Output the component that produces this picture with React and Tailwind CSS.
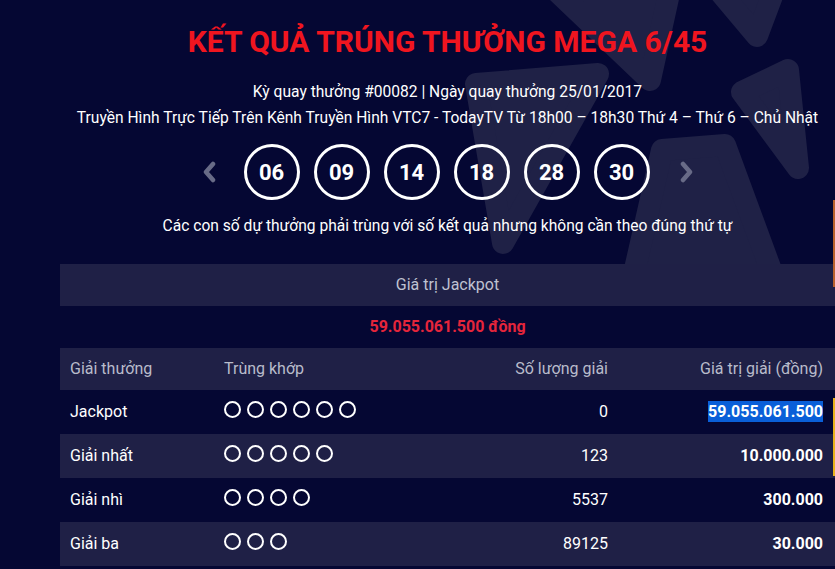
import React from 'react';

const balls = ['06', '09', '14', '18', '28', '30'];

const prizes = [
  { name: 'Jackpot', match: 6, count: '0', value: '59.055.061.500', selected: true },
  { name: 'Giải nhất', match: 5, count: '123', value: '10.000.000' },
  { name: 'Giải nhì', match: 4, count: '5537', value: '300.000' },
  { name: 'Giải ba', match: 3, count: '89125', value: '30.000' },
];

const Chevron = ({ left }) => (
  <svg width="16" height="22" viewBox="0 0 16 22" className="shrink-0">
    <polyline
      points={left ? '12,3 5,11 12,19' : '4,3 11,11 4,19'}
      fill="none"
      stroke="#686b87"
      strokeWidth="4.5"
      strokeLinecap="round"
      strokeLinejoin="round"
    />
  </svg>
);

// big faded logo petals behind the header
const Backdrop = () => (
  <svg className="absolute left-0 top-0" width="835" height="265" viewBox="0 0 835 265">
    <g fill="#1f2146" stroke="#1f2146" strokeWidth="22" strokeLinejoin="round">
      <polygon points="545,-20 672,-20 650,80" />
      <polygon points="710,-20 778,-20 757,36" />
      <polygon points="742,92 788,70 798,168" />
      <polygon points="725,145 662,150 628,300 782,300" />
      <polygon points="476,84 598,74 503,243" />
    </g>
  </svg>
);

const Dots = ({ n }) => (
  <div className="flex gap-[6px] pb-[6px]">
    {Array.from({ length: n }).map((_, i) => (
      <span key={i} className="w-[17px] h-[17px] rounded-full border-[2.5px] border-white" />
    ))}
  </div>
);

const App = () => {
  return (
    <div className="relative min-h-[569px] overflow-hidden bg-[#050733] font-['Roboto',sans-serif]">
      <Backdrop />

      <div className="relative pl-[60px]">
        <div className="w-[775px]">
          <h1 className="pt-[24px] text-center text-[30px] leading-[36px] font-bold text-[#f0151f]">
            KẾT QUẢ TRÚNG THƯỞNG MEGA 6/45
          </h1>
          <p className="mt-[19px] text-center text-[15.6px] leading-[26px] text-white">
            Kỳ quay thưởng #00082 | Ngày quay thưởng 25/01/2017
          </p>
          <p className="text-center text-[15.6px] leading-[26px] text-white">
            Truyền Hình Trực Tiếp Trên Kênh Truyền Hình VTC7 - TodayTV Từ 18h00 – 18h30 Thứ 4 – Thứ 6 – Chủ Nhật
          </p>

          <div className="mt-[13px] flex items-center justify-center">
            <div className="mr-[27px]"><Chevron left /></div>
            <div className="flex gap-[14px]">
              {balls.map((b) => (
                <div
                  key={b}
                  className="flex h-[56px] w-[56px] items-center justify-center rounded-full border-[3px] border-white text-[22px] font-bold text-white"
                >
                  {b}
                </div>
              ))}
            </div>
            <div className="ml-[29px]"><Chevron /></div>
          </div>

          <p className="mt-[13px] text-center text-[15.6px] leading-[26px] text-white">
            Các con số dự thưởng phải trùng với số kết quả nhưng không cần theo đúng thứ tự
          </p>

          <div className="mt-[25px]">
            <div className="flex h-[42px] items-center justify-center bg-[#1f2046] text-[16px] text-[#bfc2d1]">
              Giá trị Jackpot
            </div>
            <div className="flex h-[42px] items-center justify-center bg-[#050733] text-[16px] font-bold text-[#e5253b]">
              59.055.061.500 đồng
            </div>
            <div className="grid h-[42px] grid-cols-[154px_200px_206px_215px] items-center bg-[#1f2046] text-[16px] text-[#b9bccb]">
              <div className="pl-[10px]">Giải thưởng</div>
              <div className="pl-[10px]">Trùng khớp</div>
              <div className="pr-[12px] text-right">Số lượng giải</div>
              <div className="pr-[12px] text-right">Giá trị giải (đồng)</div>
            </div>
            {prizes.map((p, i) => (
              <div
                key={p.name}
                className={
                  'grid h-[44px] grid-cols-[154px_200px_206px_215px] items-center text-[16px] text-white ' +
                  (i % 2 === 0 ? 'bg-[#050733]' : 'bg-[#1f2046]')
                }
              >
                <div className="pl-[10px]">{p.name}</div>
                <div className="pl-[10px]"><Dots n={p.match} /></div>
                <div className="pr-[12px] text-right">{p.count}</div>
                <div className="pr-[12px] text-right font-bold">
                  {p.selected ? (
                    <span className="bg-[#0a5fd8] py-[1px]">{p.value}</span>
                  ) : (
                    p.value
                  )}
                </div>
              </div>
            ))}
          </div>
        </div>
      </div>

      <div className="absolute right-0 top-[200px] h-[87px] w-[2px] bg-[#b8612c]" />
      <div className="absolute right-0 top-[398px] h-[78px] w-[2px] bg-[#e8b31c]" />
    </div>
  );
};

export default App;
